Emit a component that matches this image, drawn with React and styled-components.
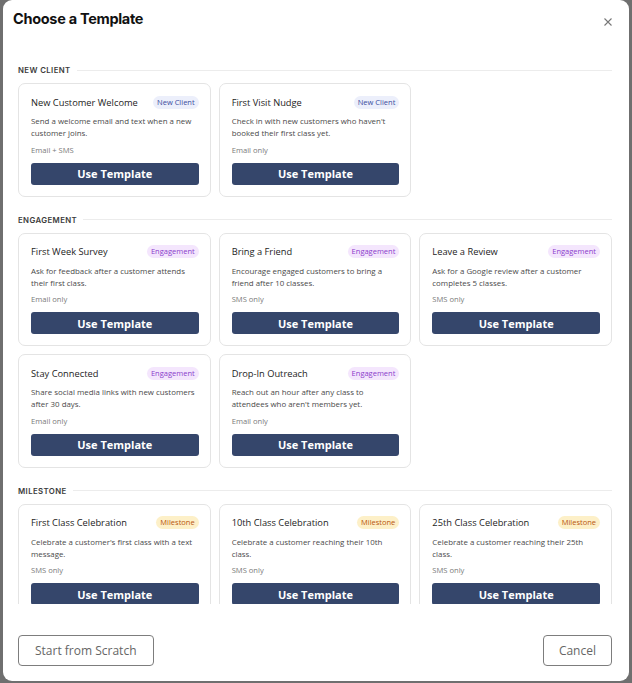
import styled, { createGlobalStyle } from "styled-components";

const GlobalStyle = createGlobalStyle`
  html, body {
    margin: 0;
    padding: 0;
    background: #6f6f6f;
    overflow: hidden;
  }
  * { box-sizing: border-box; }
`;

const badgeColors = {
  client: { bg: "#eceffb", fg: "#3b4c9e" },
  engagement: { bg: "#f4e6fd", fg: "#8a3ccb" },
  milestone: { bg: "#fdf0c8", fg: "#b9560e" },
};

const sections = [
  {
    label: "NEW CLIENT",
    kind: "client",
    badge: "New Client",
    items: [
      { title: "New Customer Welcome", text: "Send a welcome email and text when a new customer joins.", meta: "Email + SMS" },
      { title: "First Visit Nudge", text: "Check in with new customers who haven't booked their first class yet.", meta: "Email only" },
    ],
  },
  {
    label: "ENGAGEMENT",
    kind: "engagement",
    badge: "Engagement",
    items: [
      { title: "First Week Survey", text: "Ask for feedback after a customer attends their first class.", meta: "Email only" },
      { title: "Bring a Friend", text: "Encourage engaged customers to bring a friend after 10 classes.", meta: "SMS only" },
      { title: "Leave a Review", text: "Ask for a Google review after a customer completes 5 classes.", meta: "SMS only" },
      { title: "Stay Connected", text: "Share social media links with new customers after 30 days.", meta: "Email only" },
      { title: "Drop-In Outreach", text: "Reach out an hour after any class to attendees who aren't members yet.", meta: "Email only" },
    ],
  },
  {
    label: "MILESTONE",
    kind: "milestone",
    badge: "Milestone",
    items: [
      { title: "First Class Celebration", text: "Celebrate a customer's first class with a text message.", meta: "SMS only" },
      { title: "10th Class Celebration", text: "Celebrate a customer reaching their 10th class.", meta: "SMS only" },
      { title: "25th Class Celebration", text: "Celebrate a customer reaching their 25th class.", meta: "SMS only" },
    ],
  },
];

const Backdrop = styled.div`
  height: 683px;
  padding: 0 3px 2px 3px;
  display: flex;
`;

const Modal = styled.div`
  flex: 1;
  background: #ffffff;
  border-radius: 9px;
  display: flex;
  flex-direction: column;
  overflow: hidden;
`;

const Header = styled.div`
  height: 46px;
  flex-shrink: 0;
  display: flex;
  justify-content: space-between;
  align-items: flex-start;
  padding: 10px 16px 0 10px;
`;

const Title = styled.h2`
  margin: 0;
  font-family: Inter, "Liberation Sans", sans-serif;
  font-size: 14.5px;
  line-height: 18px;
  font-weight: 700;
  color: #111;
  letter-spacing: -0.3px;
`;

const Close = styled.button`
  border: 0;
  background: none;
  padding: 0;
  margin-top: 7px;
  width: 10px;
  height: 10px;
  color: #777;
  display: flex;
`;

const Body = styled.div`
  flex: 1;
  overflow: hidden;
  padding: 19px 17px 0 15px;
  display: flex;
  flex-direction: column;
  gap: 18px;
`;

const Section = styled.section`
  display: flex;
  flex-direction: column;
  gap: 8px;
`;

const SectionLabel = styled.div`
  display: flex;
  align-items: center;
  gap: 6px;
  font-family: Inter, "Liberation Sans", sans-serif;
  font-size: 7.8px;
  line-height: 10px;
  font-weight: 600;
  letter-spacing: 0.4px;
  color: #3b3b3b;

  &::after {
    content: "";
    flex: 1;
    height: 1px;
    background: #ececec;
  }
`;

const Grid = styled.div`
  display: grid;
  grid-template-columns: repeat(3, 1fr);
  column-gap: 8px;
  row-gap: 8px;
`;

const Card = styled.div`
  border: 1px solid #e4e4e4;
  border-radius: 7px;
  padding: 11px 11px 11px 12px;
  display: flex;
  flex-direction: column;
  font-family: "Open Sans", "Liberation Sans", sans-serif;
`;

const CardTop = styled.div`
  display: flex;
  justify-content: space-between;
  align-items: center;
  height: 14px;
`;

const CardTitle = styled.div`
  font-size: 9.3px;
  color: #1c1c1c;
  white-space: nowrap;
`;

const Badge = styled.span`
  font-size: 7.5px;
  line-height: 13px;
  padding: 0 4px;
  border-radius: 7px;
  background: ${(p) => badgeColors[p.$kind].bg};
  color: ${(p) => badgeColors[p.$kind].fg};
  white-space: nowrap;
`;

const CardText = styled.p`
  margin: 6px 0 0;
  font-size: 7.9px;
  line-height: 12px;
  color: #4a4a4a;
  min-height: 24px;
`;

const CardMeta = styled.div`
  margin-top: 5.5px;
  font-size: 7.6px;
  line-height: 11px;
  color: #7a7a7a;
`;

const UseButton = styled.button`
  margin-top: 7px;
  height: 22px;
  border: 0;
  border-radius: 3px;
  background: #35466b;
  color: #fff;
  font-family: "Open Sans", "Liberation Sans", sans-serif;
  font-weight: 700;
  font-size: 11px;
  cursor: pointer;
`;

const Footer = styled.div`
  flex-shrink: 0;
  display: flex;
  justify-content: space-between;
  padding: 31px 17px 15px 15px;
`;

const FooterButton = styled.button`
  height: 31px;
  padding: 0 ${(p) => (p.$wide ? "16px" : "15px")};
  border: 1px solid #7d7d7d;
  border-radius: 4px;
  background: #fff;
  color: #666;
  font-family: "Open Sans", "Liberation Sans", sans-serif;
  font-size: 12px;
  cursor: pointer;
`;

const CloseIcon = () => (
  <svg width="10" height="10" viewBox="0 0 10 10" fill="none" stroke="currentColor" strokeWidth="1.1">
    <path d="M1.5 1.5l7 7M8.5 1.5l-7 7" />
  </svg>
);

export default function App() {
  return (
    <>
      <GlobalStyle />
      <Backdrop>
        <Modal>
          <Header>
            <Title>Choose a Template</Title>
            <Close aria-label="Close">
              <CloseIcon />
            </Close>
          </Header>
          <Body>
            {sections.map((s) => (
              <Section key={s.label}>
                <SectionLabel>{s.label}</SectionLabel>
                <Grid>
                  {s.items.map((t) => (
                    <Card key={t.title}>
                      <CardTop>
                        <CardTitle>{t.title}</CardTitle>
                        <Badge $kind={s.kind}>{s.badge}</Badge>
                      </CardTop>
                      <CardText>{t.text}</CardText>
                      <CardMeta>{t.meta}</CardMeta>
                      <UseButton>Use Template</UseButton>
                    </Card>
                  ))}
                </Grid>
              </Section>
            ))}
          </Body>
          <Footer>
            <FooterButton $wide>Start from Scratch</FooterButton>
            <FooterButton>Cancel</FooterButton>
          </Footer>
        </Modal>
      </Backdrop>
    </>
  );
}
